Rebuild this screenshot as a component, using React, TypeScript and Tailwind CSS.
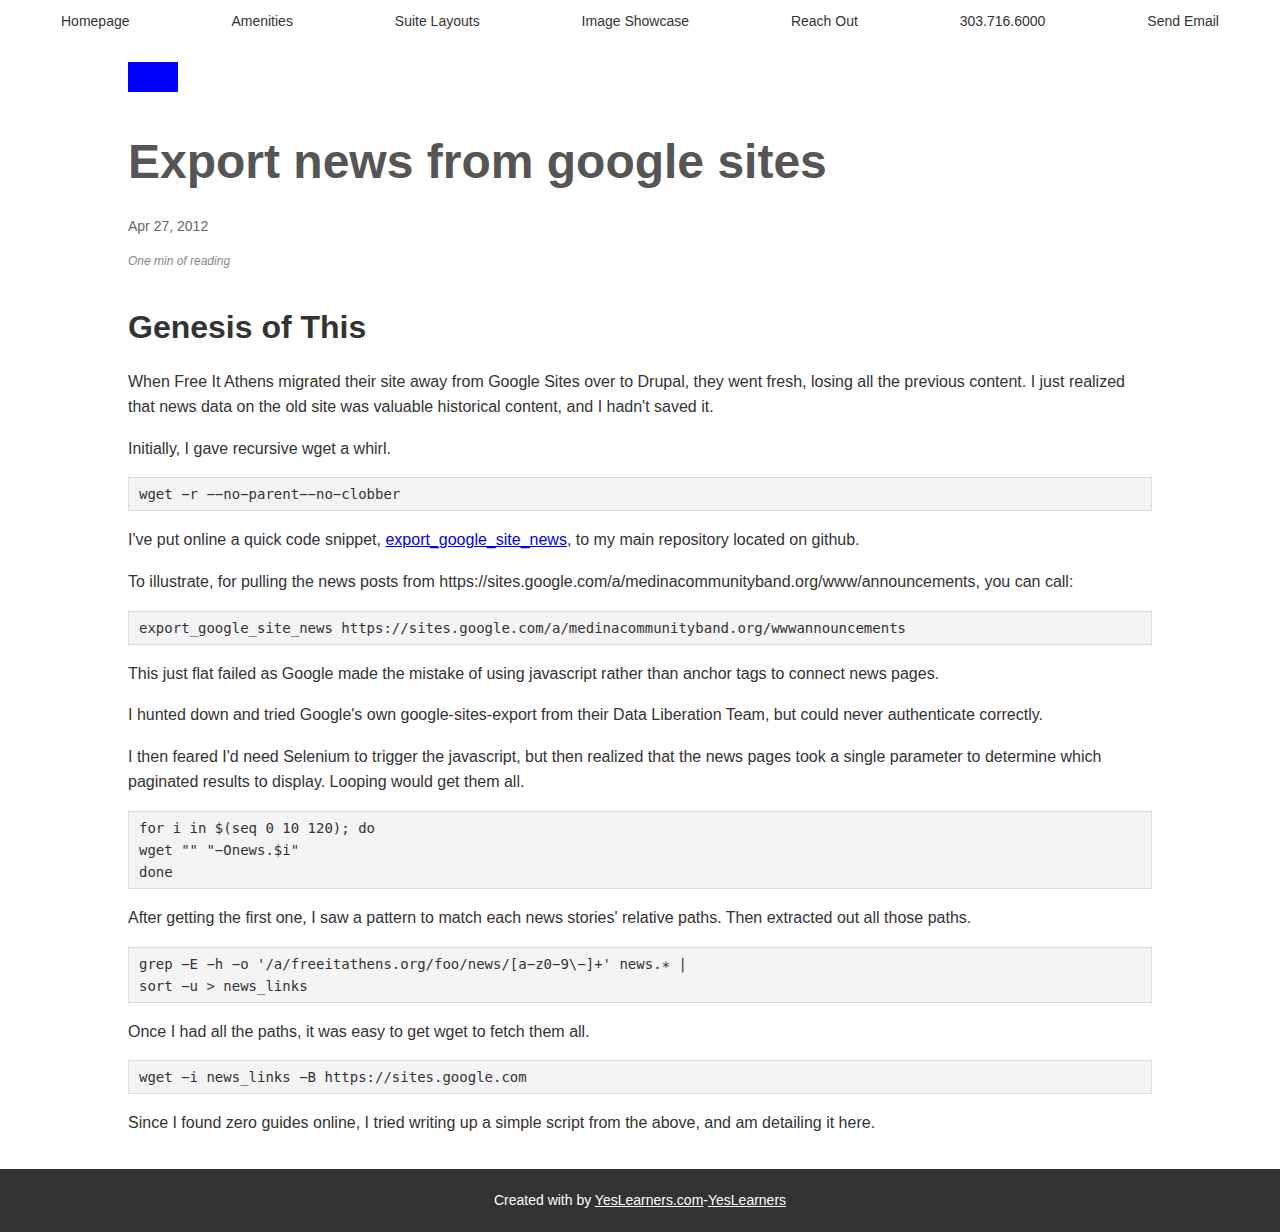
const navLinks = [
  'Homepage',
  'Amenities',
  'Suite Layouts',
  'Image Showcase',
  'Reach Out',
  '303.716.6000',
  'Send Email',
];

function Code({ lines }: { lines: string[] }) {
  return (
    <pre className="mb-4 overflow-x-auto border border-[#ddd] bg-[#f4f4f4] px-[10px] py-[5px] font-['DejaVu_Sans_Mono',monospace] text-[14px] leading-[22px] text-[#333]">
      {lines.map((l, i) => (
        <div key={i}>{l}</div>
      ))}
    </pre>
  );
}

function P({ children }: { children: React.ReactNode }) {
  return <p className="mb-4 text-[16px] leading-[1.6] text-[#333]">{children}</p>;
}

export default function App() {
  return (
    <div className="flex min-h-[1232px] flex-col bg-white font-['Liberation_Sans',Arial,sans-serif]">
      {/* Top navigation */}
      <nav className="flex h-[42px] items-center justify-between px-[61px] text-[14px] text-[#333]">
        {navLinks.map((link) => (
          <a key={link} href="#" className="hover:underline">
            {link}
          </a>
        ))}
      </nav>

      <main className="mx-auto w-[1024px] flex-1 pb-[17px]">
        <div className="mt-[20px] h-[30px] w-[50px] bg-[#0000ff]" />

        <h1 className="mt-[41px] text-[48px] font-bold leading-[1.2] text-[#555]">
          Export news from google sites
        </h1>
        <div className="mt-[24px] text-[14px] leading-[1.6] text-[#666]">Apr 27, 2012</div>
        <div className="mt-[15px] text-[12px] italic leading-[1.6] text-[#888]">
          One min of reading
        </div>

        <h2 className="mt-[37px] mb-[22px] text-[32px] font-bold leading-[1.2] text-[#333]">
          Genesis of This
        </h2>

        <P>
          When Free It Athens migrated their site away from Google Sites over to Drupal, they
          went fresh, losing all the previous content. I just realized that news data on the old
          site was valuable historical content, and I hadn't saved it.
        </P>
        <P>Initially, I gave recursive wget a whirl.</P>
        <Code lines={['wget −r −−no−parent−−no−clobber']} />
        <P>
          I've put online a quick code snippet,{' '}
          <a href="#" className="text-[#0000ee] underline">
            export_google_site_news
          </a>
          , to my main repository located on github.
        </P>
        <P>
          To illustrate, for pulling the news posts from
          https://sites.google.com/a/medinacommunityband.org/www/announcements, you can call:
        </P>
        <Code
          lines={[
            'export_google_site_news https://sites.google.com/a/medinacommunityband.org/wwwannouncements',
          ]}
        />
        <P>
          This just flat failed as Google made the mistake of using javascript rather than anchor
          tags to connect news pages.
        </P>
        <P>
          I hunted down and tried Google's own google-sites-export from their Data Liberation
          Team, but could never authenticate correctly.
        </P>
        <P>
          I then feared I'd need Selenium to trigger the javascript, but then realized that the
          news pages took a single parameter to determine which paginated results to display.
          Looping would get them all.
        </P>
        <Code lines={['for i in $(seq 0 10 120); do', 'wget "" "−Onews.$i"', 'done']} />
        <P>
          After getting the first one, I saw a pattern to match each news stories' relative
          paths. Then extracted out all those paths.
        </P>
        <Code
          lines={[
            "grep −E −h −o '/a/freeitathens.org/foo/news/[a−z0−9\\−]+' news.∗ |",
            'sort −u > news_links',
          ]}
        />
        <P>Once I had all the paths, it was easy to get wget to fetch them all.</P>
        <Code lines={['wget −i news_links −B https://sites.google.com']} />
        <P>
          Since I found zero guides online, I tried writing up a simple script from the above,
          and am detailing it here.
        </P>
      </main>

      <footer className="flex h-[63px] items-center justify-center bg-[#333] text-[14px] text-white">
        <span>
          Created with by{' '}
          <a href="#" className="underline">
            YesLearners.com
          </a>
          -
          <a href="#" className="underline">
            YesLearners
          </a>
        </span>
      </footer>
    </div>
  );
}
